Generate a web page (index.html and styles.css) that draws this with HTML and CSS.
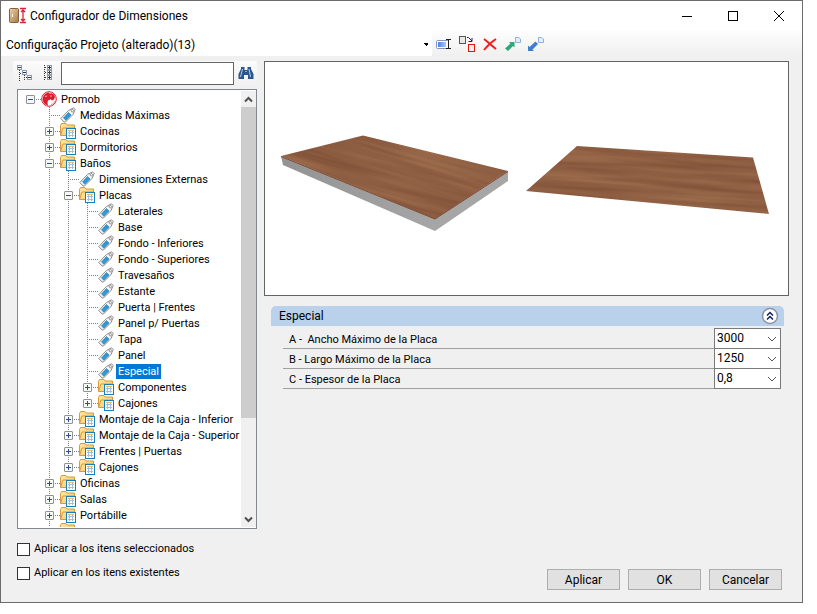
FILE: index.html
```html
<!DOCTYPE html>
<html lang="es">
<head>
<meta charset="utf-8">
<title>Configurador de Dimensiones</title>
<link rel="stylesheet" href="styles.css">
</head>
<body>
<svg class="defs" aria-hidden="true">
  <defs>
    <linearGradient id="folderFill" x1="0" y1="0" x2="1" y2="1"><stop offset="0" stop-color="#ffe9a8"/><stop offset="1" stop-color="#f5c45a"/></linearGradient>
    <linearGradient id="door" x1="0" y1="0" x2="1" y2="1"><stop offset="0" stop-color="#f0d0a8"/><stop offset="1" stop-color="#a87848"/></linearGradient>
    <linearGradient id="field" x1="0" x2="1"><stop offset="0" stop-color="#4d83e0"/><stop offset="1" stop-color="#a9c8f5"/></linearGradient>
    <linearGradient id="edge" x1="0" x2="1"><stop offset="0" stop-color="#939393"/><stop offset="1" stop-color="#a6a6a6"/></linearGradient>
    <filter id="wood" x="0" y="0" width="1" height="1" color-interpolation-filters="sRGB"><feTurbulence type="fractalNoise" baseFrequency=".008 .16" numOctaves="3" seed="4"/><feColorMatrix values=".16 0 0 0 .48  .16 0 0 0 .29  .12 0 0 0 .20  0 0 0 0 1"/></filter>
    <clipPath id="topA"><path d="M281 156 363 135.500 508 171 435 219Z"/></clipPath>
    <clipPath id="topB"><path d="M526 191 577 146 753 157.500 769 214Z"/></clipPath>
    <symbol id="tag" viewBox="0 0 16 16">
      <path d="M.8 11.500 8.500 3.500 13.500 .8 15.200 2.500 13 7.500 5.500 15 4 15Z" fill="#f4f4f4" stroke="#8b8b8b"/>
      <path d="M3.500 11 8.500 5.500 11 8 6 13.300Z" fill="#2b9ad6" stroke="#1874ae" stroke-width=".6"/>
      <circle cx="12.300" cy="3.700" r="1.200" fill="#fff" stroke="#777" stroke-width=".8"/>
    </symbol>
    <symbol id="folder" viewBox="0 0 16 16">
      <path d="M.5 12.500V2.500L1.500.5H6L7 2H14.500V5" fill="url(#folderFill)" stroke="#d79a38"/>
      <path d="M.5 12.500 3 5H15V12.500Z" fill="url(#folderFill)" stroke="#d79a38"/>
      <rect x="6.500" y="5.500" width="9" height="10" fill="#fff" stroke="#157fb8"/>
      <path d="M8 7.500H14" stroke="#f0b860"/>
      <path d="M8 9.500H14M8 12.500H14M9.500 8V14M12.500 8V14" stroke="#9cc0de"/>
    </symbol>
    <symbol id="promob" viewBox="0 0 16 16">
      <circle cx="8" cy="8" r="7.300" fill="#fff" stroke="#d91f2b"/>
      <path d="M2 10C1 5 4 2 8 1.500L9 3 10 2 13 3.500 14 6 13 8.500 11 9.500 9.500 8 8 9.500 7 9 6.500 12 7 14.500C4 14 2.500 12 2 10Z" fill="#d91f2b"/>
      <path d="M4 5.500 6 5M9 5H11" stroke="#f7b5ba"/>
      <path d="M10 13.500C12 13 13.500 11.500 14 10" fill="none" stroke="#e8808a"/>
    </symbol>
  </defs>
</svg>
<main class="window">
  <header class="titlebar">
    <svg class="app-icon" width="18" height="18" viewBox="0 0 18 18" aria-hidden="true"><rect x=".5" y="1.500" width="9" height="14" rx="1" fill="url(#door)" stroke="#806040"/><path d="M3.500 7V10" stroke="#fff"/><path d="M11 1.500H17M11 15.500H17M14 3V14M12 5 14 3 16 5M12 12 14 14 16 12" fill="none" stroke="#e0203a" stroke-width="1.300"/></svg>
    <h1>Configurador de Dimensiones</h1>
    <button class="caption" aria-label="Minimizar"><svg width="12" height="12"><path d="M1 6.500H11" stroke="#000"/></svg></button>
    <button class="caption" aria-label="Maximizar"><svg width="12" height="12"><rect x="1.500" y="1.500" width="9" height="9" fill="none" stroke="#000"/></svg></button>
    <button class="caption" aria-label="Cerrar"><svg width="12" height="12"><path d="M1 1 11 11M11 1 1 11" stroke="#000"/></svg></button>
  </header>
  <div class="toolbar">
    <select class="project" aria-label="Proyecto"><option>Configuração Projeto (alterado)(13)</option></select>
    <button class="tool" aria-label="Renombrar"><svg width="16" height="16"><rect x=".5" y="4.500" width="12" height="8" rx="1" fill="#fff" stroke="#8794b5"/><rect x="2" y="6" width="8" height="5" fill="url(#field)"/><path d="M10 3.500H15M10 12.500H15M12.500 4V12" stroke="#222"/></svg></button>
    <button class="tool" aria-label="Reemplazar"><svg width="16" height="16"><rect x=".5" y=".5" width="6" height="7" fill="#e8e8e8" stroke="#555"/><rect x="9.500" y="8.500" width="6" height="7" fill="#eee" stroke="#e01818"/><path d="M8 1.500H9.500L13 5M13 2V5.500H9.500" fill="none" stroke="#10286e"/></svg></button>
    <button class="tool" aria-label="Eliminar"><svg width="16" height="16"><path d="M2 3C6 6 10 10 14 13M14 3C9 6 6 9 2 14" fill="none" stroke="#f02020" stroke-width="2"/></svg></button>
    <button class="tool" aria-label="Exportar"><svg width="16" height="16"><path d="M0 12.500 5.500 7.500 4 6H9.500V11.500L8 10 3 15Z" fill="#2ba878"/><path d="M10.500 1.500H13.500L15.500 3V6.500H10.500Z" fill="#e4effc" stroke="#8db1df"/></svg></button>
    <button class="tool" aria-label="Importar"><svg width="16" height="16"><path d="M0 9.500 1.500 11 7.500 5.500 10 8 4.500 13.500 6 15H0Z" fill="#3f7fce"/><path d="M10.500 1.500H13.500L15.500 3V6.500H10.500Z" fill="#e4effc" stroke="#8db1df"/></svg></button>
  </div>
  <div class="content">
    <section class="side">
      <div class="search">
        <button class="tool" aria-label="Contraer todo"><svg width="16" height="16"><path d="M2.500 5V16M3 8.500H5M9 12.500H11M7.500 10V16" stroke="#333" stroke-dasharray="1 1"/><g fill="#fff" stroke="#8a9ab0"><rect x=".5" y=".5" width="4" height="4"/><rect x="5.500" y="5.500" width="4" height="4"/><rect x="10.500" y="10.500" width="4" height="4"/></g><path d="M1 2.500H4M6 7.500H9M11 12.500H14" stroke="#333"/></svg></button>
        <button class="tool" aria-label="Expandir todo"><svg width="16" height="16"><path d="M4.500 0V16M5 2.500H8M5 7.500H8M5 12.500H8" stroke="#333" stroke-dasharray="1 1"/><g fill="#fff" stroke="#8a9ab0"><rect x="7.500" y=".5" width="4" height="4"/><rect x="7.500" y="5.500" width="4" height="4"/><rect x="7.500" y="10.500" width="4" height="4"/></g><path d="M8 2.500H11M8 7.500H11M8 12.500H11M9.500 1V4M9.500 6V9M9.500 11V14" stroke="#333"/></svg></button>
        <input type="text" aria-label="Buscar">
        <button class="tool" aria-label="Buscar"><svg width="16" height="16"><path d="M.5 9 3 4V2H6.500V5H9.500V2H13V4L15.500 9V14H10V10H6V14H.5Z" fill="#2b568f"/><path d="M4.500 4 2.500 12M11 4 12.500 12" stroke="#b8d0ee"/><path d="M7 6.500H9" stroke="#88a8d0"/></svg></button>
      </div>
      <div class="treebox">
        <ul class="tree" id="tree"></ul>
        <div class="scrollbar">
          <button aria-label="Subir"><svg width="9" height="7"><path d="M1 5.500 4.500 2 8 5.500" fill="none" stroke="#505050" stroke-width="2"/></svg></button>
          <div class="track"><div class="thumb"></div></div>
          <button aria-label="Bajar"><svg width="9" height="7"><path d="M1 1.500 4.500 5 8 1.500" fill="none" stroke="#505050" stroke-width="2"/></svg></button>
        </div>
      </div>
    </section>
    <section class="detail">
      <div class="preview">
        <svg viewBox="265 62 523 233" role="img" aria-label="Placa">
          <path d="M281 156 435 219V231L283 165Z" fill="url(#edge)"/>
          <path d="M435 219 508 171V181L435 231Z" fill="#a6a6a6"/>
          <g clip-path="url(#topA)"><rect x="240" y="-60" width="340" height="300" transform="rotate(16 281 156)" filter="url(#wood)"/></g>
          <path d="M281 156.500 435 219 508 171.500" fill="none" stroke="#7e4930"/>
          <g clip-path="url(#topB)"><rect x="500" y="110" width="290" height="130" transform="rotate(4 526 191)" filter="url(#wood)"/></g>
        </svg>
      </div>
      <section class="group">
        <header class="group-head"><h2>Especial</h2><button aria-label="Contraer"><svg width="18" height="18"><circle cx="9" cy="9" r="7.500" fill="#fff" stroke="#8d93a8" stroke-width="1.500"/><path d="M6 8.500 9 5.500 12 8.500M6 12.500 9 9.500 12 12.500" fill="none" stroke="#10205e" stroke-width="1.500"/></svg></button></header>
        <div class="fields">
          <div class="field"><label for="a">A -&nbsp; Ancho Máximo de la Placa</label><select id="a"><option>3000</option></select></div>
          <div class="field"><label for="b">B - Largo Máximo de la Placa</label><select id="b"><option>1250</option></select></div>
          <div class="field"><label for="c">C - Espesor de la Placa</label><select id="c"><option>0,8</option></select></div>
        </div>
      </section>
    </section>
  </div>
  <footer class="footer">
    <div class="checks">
      <label><input type="checkbox">Aplicar a los itens seleccionados</label>
      <label><input type="checkbox">Aplicar en los itens existentes</label>
    </div>
    <div class="actions"><button>Aplicar</button><button>OK</button><button>Cancelar</button></div>
  </footer>
</main>
<script src="tree.js"></script>
</body>
</html>
```
FILE: styles.css
```css
* { box-sizing: border-box; }
body { margin: 0; background: #fff; font: 12px/16px Roboto, "Liberation Sans", sans-serif; color: #000; }
button { font: inherit; color: inherit; padding: 0; border: 0; background: none; }
svg { display: block; }
.defs { position: absolute; width: 0; height: 0; }
.window { display: flex; flex-direction: column; height: calc(100vh - 11px); margin-right: 14px; border: 1px solid #6b6b6b; background: #f0f0f0; }
.titlebar { display: flex; align-items: center; height: 30px; padding-left: 8px; background: #fff; }
.titlebar h1 { flex: 1; margin: 0 0 0 3px; font: inherit; }
.caption { display: grid; place-items: center; width: 46px; height: 30px; }
.toolbar { display: flex; align-items: center; height: 25px; background: linear-gradient(#fdfdfd, #f0f0f0); }
.project { appearance: none; width: 431px; height: 25px; padding: 2px 0 0 5px; border: 0; border-radius: 0; font: inherit; color: #000; background: conic-gradient(from -45deg at 50% 100%, #000 90deg, #0000 0) right 3px top 12px / 6px 3px no-repeat #fff; }
.tool { display: grid; place-items: center; width: 23px; height: 23px; }
.content { display: flex; flex: 1; min-height: 0; gap: 7px; padding: 5px 13px 0 12px; }
.side { display: flex; flex-direction: column; width: 244px; }
.search { display: flex; align-items: center; height: 24px; background: linear-gradient(#fbfbfb, #f0f0f0); }
.search input { flex: 1; min-width: 0; height: 23px; margin: 0 0 0 2px; border: 1px solid #646464; background: #fff; }
.treebox { display: flex; flex: 1; min-height: 0; margin: 4px 0 0 4px; padding: 1px 0 1px 1px; border: 1px solid #828790; background: #fff; }
.tree { flex: 1; min-width: 0; overflow: hidden; padding-left: 7px; }
.tree, .tree ul { margin: 0; list-style: none; }
.tree ul { padding-left: 19px; }
.tree ul > li { background: repeating-linear-gradient(#808080 0 1px, #0000 1px 2px) 4px 0 / 1px 100% no-repeat; }
.tree ul > li:last-child { background-size: 1px 8px; }
.row { display: flex; align-items: center; height: 16px; white-space: nowrap; font-size: 11px; line-height: 15px; background: repeating-linear-gradient(90deg, #808080 0 1px, #0000 1px 2px) 4px 8px / 11px 1px no-repeat; }
.toggle { flex: none; width: 9px; height: 9px; border: 1px solid #919191; border-radius: 1px; background: linear-gradient(#2b4d91, #2b4d91) 50% 50% / 5px 1px no-repeat, #f8f8f8; }
.toggle.closed { background: linear-gradient(#2b4d91, #2b4d91) 50% 50% / 5px 1px no-repeat, linear-gradient(#2b4d91, #2b4d91) 50% 50% / 1px 5px no-repeat, #f8f8f8; }
.row svg { flex: none; margin: 0 2px 0 6px; }
.row.leaf svg { margin-left: 15px; }
.row span { padding: 0 2px; }
.row.selected span { color: #fff; background: #0078d7; }
.scrollbar { display: flex; flex-direction: column; width: 15px; background: #f0f0f0; }
.scrollbar button { display: grid; place-items: center; height: 16px; }
.track { flex: 1; }
.thumb { height: 77%; background: #cdcdcd; }
.detail { flex: 1; min-width: 0; }
.preview { border: 1px solid #646464; background: #fff; }
.preview svg { width: 100%; }
.group { margin: 10px 5px 0 7px; }
.group-head { display: flex; align-items: center; justify-content: space-between; height: 20px; padding: 0 5px 0 8px; border-radius: 5px 5px 0 0; background: #b9d1ea; }
.group-head h2 { margin: 0; font: inherit; }
.fields { margin: 2px 3px 0 12px; border-top: 1px solid #0000; }
.field { display: flex; height: 20px; border-bottom: 1px solid #a0a0a0; }
.field label { flex: 1; padding: 3px 0 0 6px; font-size: 11px; }
.field select { appearance: none; width: 67px; height: 21px; margin-top: -1px; padding: 0 0 2px 2px; border: 1px solid #7a7a7a; border-radius: 0; font: inherit; color: #000; background: linear-gradient(45deg, #0000 45%, #555 45% 60%, #0000 60%) right 8px center / 4px 4px no-repeat, linear-gradient(-45deg, #0000 45%, #555 45% 60%, #0000 60%) right 4px center / 4px 4px no-repeat #fff; }
.footer { display: flex; justify-content: space-between; align-items: flex-end; padding: 12px 20px 12px 16px; }
.checks { display: flex; flex-direction: column; gap: 8px; padding-bottom: 9px; font-size: 11px; }
.checks label { display: flex; align-items: center; gap: 4px; }
.checks input { appearance: none; width: 13px; height: 13px; margin: 0; border: 1px solid #333; background: #fff; }
.actions { display: flex; gap: 8px; }
.actions button { width: 73px; height: 21px; border: 1px solid #adadad; background: #e1e1e1; }
```
FILE: tree.js
```js
const leaf = (name) => ({ name });
const closed = (name) => ({ name, children: [] });
const root = {
  name: 'Promob', icon: 'promob', children: [
    leaf('Medidas Máximas'), closed('Cocinas'), closed('Dormitorios'),
    { name: 'Baños', children: [
      leaf('Dimensiones Externas'),
      { name: 'Placas', children: [
        ...['Laterales', 'Base', 'Fondo - Inferiores', 'Fondo - Superiores', 'Travesaños', 'Estante', 'Puerta | Frentes', 'Panel p/ Puertas', 'Tapa', 'Panel'].map(leaf),
        { name: 'Especial', selected: true }, closed('Componentes'), closed('Cajones'),
      ] },
      closed('Montaje de la Caja - Inferior'), closed('Montaje de la Caja - Superior'),
      closed('Frentes | Puertas'), closed('Cajones'),
    ] },
    closed('Oficinas'), closed('Salas'), closed('Portábille'), closed('Exposiciones'),
  ],
};

function render(node) {
  const kids = node.children;
  const icon = node.icon || (kids ? 'folder' : 'tag');
  const toggle = kids ? `<button class="toggle${kids.length ? '' : ' closed'}" aria-label="${node.name}"></button>` : '';
  const row = `<div class="row${kids ? '' : ' leaf'}${node.selected ? ' selected' : ''}">${toggle}<svg width="16" height="16" aria-hidden="true"><use href="#${icon}"/></svg><span>${node.name}</span></div>`;
  return `<li>${row}${kids && kids.length ? `<ul>${kids.map(render).join('')}</ul>` : ''}</li>`;
}

document.getElementById('tree').innerHTML = render(root);
```
